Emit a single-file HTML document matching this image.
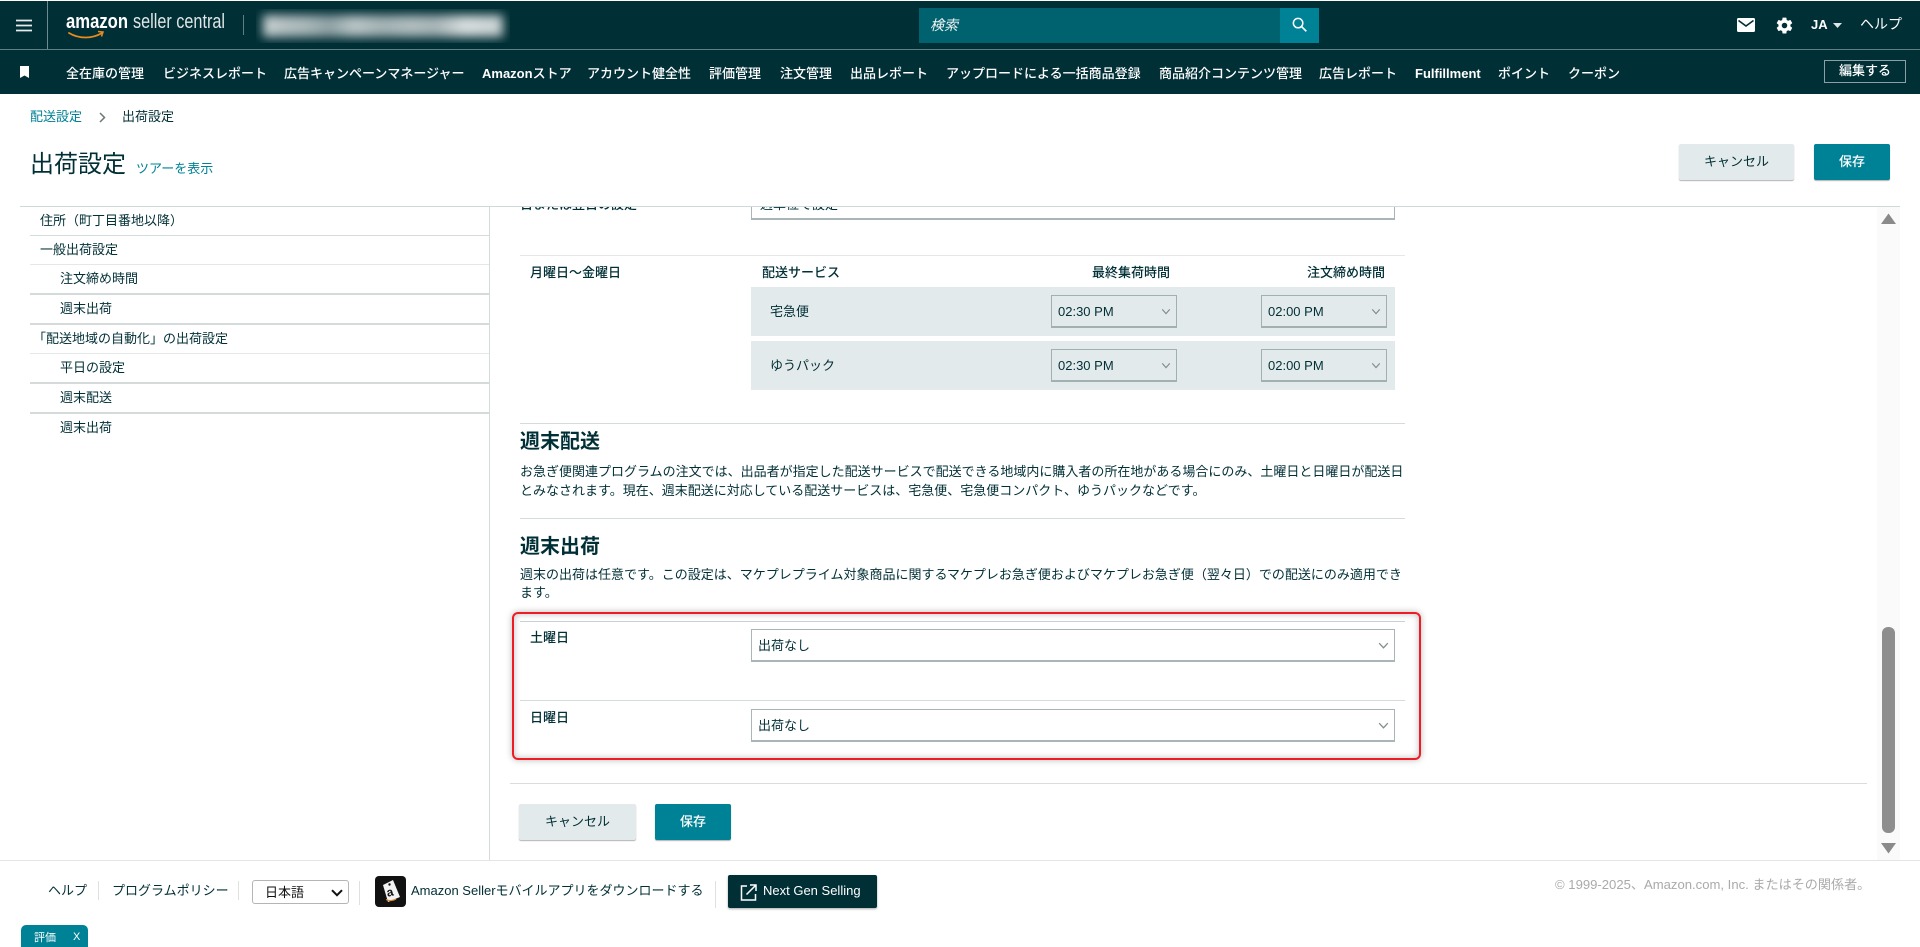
<!DOCTYPE html>
<html lang="ja"><head><meta charset="utf-8"><title>出荷設定</title>
<style>
*{box-sizing:border-box}
html,body{margin:0;padding:0;width:1920px;height:947px;overflow:hidden;background:#fff}
body{position:relative;font-family:"Liberation Sans","Noto Sans CJK JP",sans-serif;font-size:13px;color:#002f36}
.t{position:absolute;white-space:nowrap;line-height:20px;font-size:13px}
.b{position:absolute}
.n{color:#fff;font-weight:500;top:64px}
.n b{font-weight:700}
.s{font-weight:500}
.l{color:#008296}
.sel{position:absolute;background:#fff;border:1px solid #a9b5b7;border-bottom:2px solid #a9b5b7}
.sel span{position:absolute;left:6px;top:50%;margin-top:1px;transform:translateY(-50%);line-height:20px;white-space:nowrap;font-size:13px}
.sel svg{position:absolute;right:5px;top:50%;margin-top:-3px}
.btn{position:absolute;text-align:center;border-radius:2px;box-shadow:0 1px 1px rgba(0,0,0,.3);font-size:13px;height:36px;line-height:35px}
.c{background:#e3eaeb;color:#002f36}
.v{background:#008296;color:#fff;font-weight:500}
.hl{position:absolute;height:1px;background:#d5dbdb}
</style></head><body>

<!-- top bars -->
<div class="b" style="left:0;top:1px;width:1920px;height:48px;background:#002f36"></div>
<div class="b" style="left:0;top:49px;width:1920px;height:1px;background:#5f7f83"></div>
<div class="b" style="left:0;top:50px;width:1920px;height:44px;background:#002f36"></div>

<svg class="b" style="left:16px;top:19px" width="16" height="13" viewBox="0 0 16 13"><path d="M0 1.500h16M0 6.500h16M0 11.500h16" stroke="#e6eaea" stroke-width="1.700"/></svg>
<div class="b" style="left:47px;top:1px;width:1px;height:48px;background:#6f8a8e"></div>

<!-- logo -->
<svg class="b" style="left:60px;top:7px" width="175" height="36" viewBox="0 0 175 36">
<text x="6" y="21" fill="#fff" font-family="Liberation Sans" font-weight="700" font-size="20" textLength="62" lengthAdjust="spacingAndGlyphs">amazon</text>
<text x="73" y="21" fill="#dfe6e7" font-family="Liberation Sans" font-size="20" textLength="92" lengthAdjust="spacingAndGlyphs">seller central</text>
<path d="M9 26c10 6 23 6 33 0" fill="none" stroke="#e88b1f" stroke-width="1.800" stroke-linecap="round"/>
<path d="M38 24.500l5 .5-1.500 4.500" fill="none" stroke="#e88b1f" stroke-width="1.500"/>
</svg>
<div class="b" style="left:243px;top:15px;width:1px;height:20px;background:#5f7f83"></div>

<!-- blurred store name -->
<div class="b" style="left:256px;top:9px;width:254px;height:34px;overflow:hidden">
  <div class="b" style="left:7px;top:6px;width:240px;height:22px;background:linear-gradient(90deg,#c9d3d4 0%,#b5c1c3 8%,#a9b7b9 18%,#8fa2a5 28%,#b9c5c7 38%,#a3b2b4 50%,#b0bdbf 62%,#a6b4b6 72%,#d6dddd 84%,#c6d0d1 100%);filter:blur(5px)"></div>
</div>

<!-- search -->
<div class="b" style="left:919px;top:8px;width:361px;height:35px;background:#00616f"></div>
<div class="t" style="left:930px;top:15px;color:#f0f5f5;font-style:italic;font-size:14px">検索</div>
<div class="b" style="left:1280px;top:8px;width:39px;height:35px;background:#008296"></div>
<svg class="b" style="left:1291px;top:16px" width="17" height="17" viewBox="0 0 18 18"><circle cx="7.500" cy="7.500" r="5" fill="none" stroke="#fff" stroke-width="1.600"/><path d="M11.200 11.200l5 5" stroke="#fff" stroke-width="1.800"/></svg>

<!-- right icons -->
<svg class="b" style="left:1737px;top:18px" width="18" height="14" viewBox="0 0 18 14"><rect width="18" height="14" rx="1.500" fill="#fff"/><path d="M1.500 2.500L9 8l7.500-5.500" fill="none" stroke="#002f36" stroke-width="1.600"/></svg>
<svg class="b" style="left:1775px;top:16px" width="19" height="19" viewBox="0 0 24 24"><path fill="#fff" d="M19.400 13c.04-.33.06-.66.06-1s-.02-.67-.06-1l2.100-1.640c.19-.15.24-.42.12-.64l-2-3.460c-.12-.22-.39-.3-.61-.22l-2.480 1a7.300 7.300 0 0 0-1.730-1L14.430 2.400a.49.49 0 0 0-.49-.4h-4a.49.49 0 0 0-.49.42L9.080 5.050c-.61.25-1.170.59-1.690 1l-2.490-1a.5.5 0 0 0-.61.22l-2 3.460c-.13.22-.07.49.12.64L4.500 11c-.04.33-.07.66-.07 1s.03.67.07 1l-2.110 1.640c-.19.15-.24.42-.12.64l2 3.460c.12.22.39.3.61.22l2.490-1c.52.4 1.080.74 1.690 1l.38 2.650c.03.24.24.42.49.42h4c.25 0 .46-.18.49-.42l.38-2.650c.61-.25 1.170-.59 1.690-1l2.490 1c.22.08.49 0 .61-.22l2-3.460c.12-.22.07-.49-.12-.64L19.400 13zM12 15.500A3.500 3.500 0 1 1 12 8.500a3.500 3.500 0 0 1 0 7z"/></svg>
<div class="t" style="left:1811px;top:15px;color:#fff;font-size:13px;font-weight:700">JA</div>
<svg class="b" style="left:1833px;top:23px" width="9" height="5" viewBox="0 0 9 5"><path d="M0 0h9L4.500 5z" fill="#dfe6e7"/></svg>
<div class="t" style="left:1860px;top:14px;color:#fff;font-size:14px">ヘルプ</div>

<!-- nav -->
<svg class="b" style="left:20px;top:66px" width="9" height="12" viewBox="0 0 9 12"><path d="M0 0h9v12L4.500 9.500 0 12z" fill="#fff"/></svg>
<div class="t n" style="left:66px">全在庫の管理</div>
<div class="t n" style="left:163px">ビジネスレポート</div>
<div class="t n" style="left:284px">広告キャンペーンマネージャー</div>
<div class="t n" style="left:482px"><b>Amazon</b>ストア</div>
<div class="t n" style="left:587px">アカウント健全性</div>
<div class="t n" style="left:709px">評価管理</div>
<div class="t n" style="left:780px">注文管理</div>
<div class="t n" style="left:850px">出品レポート</div>
<div class="t n" style="left:946px">アップロードによる一括商品登録</div>
<div class="t n" style="left:1159px">商品紹介コンテンツ管理</div>
<div class="t n" style="left:1319px">広告レポート</div>
<div class="t n" style="left:1415px"><b>Fulfillment</b></div>
<div class="t n" style="left:1498px">ポイント</div>
<div class="t n" style="left:1568px">クーポン</div>
<div class="b" style="left:1824px;top:60px;width:82px;height:23px;border:1px solid #8aa0a3;color:#fff;text-align:center;line-height:20px;font-weight:500">編集する</div>

<!-- page header -->
<div class="t l" style="left:30px;top:107px">配送設定</div>
<svg class="b" style="left:99px;top:112px" width="7" height="11" viewBox="0 0 7 11"><path d="M1 1l4.500 4.500L1 10" fill="none" stroke="#6c7778" stroke-width="1.500"/></svg>
<div class="t" style="left:122px;top:107px">出荷設定</div>
<div class="t" style="left:30px;top:150px;font-size:24px;line-height:30px">出荷設定</div>
<div class="t l" style="left:136px;top:159px">ツアーを表示</div>
<div class="btn c" style="left:1679px;top:144px;width:115px">キャンセル</div>
<div class="btn v" style="left:1814px;top:144px;width:76px">保存</div>
<div class="hl" style="left:20px;top:206px;width:1880px;background:#d0d9da"></div>

<!-- sidebar -->
<div class="b" style="left:489px;top:207px;width:1px;height:653px;background:#d5dbdb"></div>
<div class="t" style="left:40px;top:211px">住所（町丁目番地以降）</div>
<div class="hl" style="left:30px;top:235px;width:459px"></div>
<div class="t" style="left:40px;top:240px">一般出荷設定</div>
<div class="hl" style="left:30px;top:264px;width:459px;background:#e4e8e8"></div>
<div class="t" style="left:60px;top:269px">注文締め時間</div>
<div class="hl" style="left:30px;top:293px;width:459px;height:2px"></div>
<div class="t" style="left:60px;top:299px">週末出荷</div>
<div class="hl" style="left:30px;top:323px;width:459px;height:2px"></div>
<div class="t" style="left:33px;top:329px">「配送地域の自動化」の出荷設定</div>
<div class="hl" style="left:30px;top:353px;width:459px;background:#e4e8e8"></div>
<div class="t" style="left:60px;top:358px">平日の設定</div>
<div class="hl" style="left:30px;top:382px;width:459px;height:2px"></div>
<div class="t" style="left:60px;top:388px">週末配送</div>
<div class="hl" style="left:30px;top:412px;width:459px;height:2px"></div>
<div class="t" style="left:60px;top:418px">週末出荷</div>

<!-- clipped top row -->
<div class="b" style="left:490px;top:207px;width:1000px;height:20px;overflow:hidden">
  <div class="t s" style="left:30px;top:-12px">日または翌日の設定</div>
  <div class="b" style="left:261px;top:-30px;width:644px;height:43px;background:#fff;border:1px solid #a9b5b7;border-bottom:2px solid #a9b5b7"></div>
  <div class="t" style="left:270px;top:-12px">週単位で設定</div>
</div>

<!-- weekday -->
<div class="hl" style="left:520px;top:255px;width:885px;background:#e4e8e8"></div>
<div class="t s" style="left:530px;top:263px">月曜日〜金曜日</div>
<div class="t s" style="left:762px;top:263px">配送サービス</div>
<div class="t s" style="left:1092px;top:263px">最終集荷時間</div>
<div class="t s" style="left:1307px;top:263px">注文締め時間</div>
<div class="b" style="left:751px;top:287px;width:644px;height:49px;background:#e3eaeb"></div>
<div class="b" style="left:751px;top:341px;width:644px;height:49px;background:#e3eaeb"></div>
<div class="t" style="left:770px;top:302px">宅急便</div>
<div class="t" style="left:770px;top:356px">ゆうパック</div>

<div class="sel" style="left:1051px;top:295px;width:126px;height:33px;background:#e3eaeb;border:1px solid #a3b0b2;border-bottom:2px solid #a3b0b2"><span>02:30 PM</span><svg width="10" height="7" viewBox="0 0 12 8"><path d="M1.500 1.500L6 6.500l4.500-5" fill="none" stroke="#7e8d8f" stroke-width="1.400"/></svg></div>
<div class="sel" style="left:1261px;top:295px;width:126px;height:33px;background:#e3eaeb;border:1px solid #a3b0b2;border-bottom:2px solid #a3b0b2"><span>02:00 PM</span><svg width="10" height="7" viewBox="0 0 12 8"><path d="M1.500 1.500L6 6.500l4.500-5" fill="none" stroke="#7e8d8f" stroke-width="1.400"/></svg></div>
<div class="sel" style="left:1051px;top:349px;width:126px;height:33px;background:#e3eaeb;border:1px solid #a3b0b2;border-bottom:2px solid #a3b0b2"><span>02:30 PM</span><svg width="10" height="7" viewBox="0 0 12 8"><path d="M1.500 1.500L6 6.500l4.500-5" fill="none" stroke="#7e8d8f" stroke-width="1.400"/></svg></div>
<div class="sel" style="left:1261px;top:349px;width:126px;height:33px;background:#e3eaeb;border:1px solid #a3b0b2;border-bottom:2px solid #a3b0b2"><span>02:00 PM</span><svg width="10" height="7" viewBox="0 0 12 8"><path d="M1.500 1.500L6 6.500l4.500-5" fill="none" stroke="#7e8d8f" stroke-width="1.400"/></svg></div>

<div class="hl" style="left:520px;top:423px;width:885px"></div>

<!-- weekend delivery -->
<div class="t" style="left:520px;top:428px;font-size:20px;font-weight:700;line-height:28px">週末配送</div>
<div class="t" style="left:520px;top:462px">お急ぎ便関連プログラムの注文では、出品者が指定した配送サービスで配送できる地域内に購入者の所在地がある場合にのみ、土曜日と日曜日が配送日</div>
<div class="t" style="left:520px;top:481px">とみなされます。現在、週末配送に対応している配送サービスは、宅急便、宅急便コンパクト、ゆうパックなどです。</div>
<div class="hl" style="left:520px;top:518px;width:885px"></div>

<!-- weekend shipping -->
<div class="t" style="left:520px;top:533px;font-size:20px;font-weight:700;line-height:28px">週末出荷</div>
<div class="t" style="left:520px;top:565px">週末の出荷は任意です。この設定は、マケプレプライム対象商品に関するマケプレお急ぎ便およびマケプレお急ぎ便（翌々日）での配送にのみ適用でき</div>
<div class="t" style="left:520px;top:583px">ます。</div>

<div class="hl" style="left:520px;top:621px;width:885px;background:#c8d2d3"></div>
<div class="t s" style="left:530px;top:628px">土曜日</div>
<div class="sel" style="left:751px;top:629px;width:644px;height:33px"><span>出荷なし</span><svg width="11" height="7" viewBox="0 0 14 8"><path d="M1.500 1L7 7l5.500-6" fill="none" stroke="#7e8d8f" stroke-width="1.600"/></svg></div>
<div class="hl" style="left:520px;top:700px;width:885px"></div>
<div class="t s" style="left:530px;top:708px">日曜日</div>
<div class="sel" style="left:751px;top:709px;width:644px;height:33px"><span>出荷なし</span><svg width="11" height="7" viewBox="0 0 14 8"><path d="M1.500 1L7 7l5.500-6" fill="none" stroke="#7e8d8f" stroke-width="1.600"/></svg></div>

<!-- red highlight -->
<div class="b" style="left:512px;top:612px;width:909px;height:148px;border:2px solid #ee1c25;border-radius:6px;box-shadow:0 0 7px rgba(0,0,0,.28),inset 0 0 7px rgba(0,0,0,.25)"></div>

<!-- bottom actions -->
<div class="hl" style="left:510px;top:783px;width:1357px;background:#dcdcdc"></div>
<div class="btn c" style="left:519px;top:804px;width:117px">キャンセル</div>
<div class="btn v" style="left:655px;top:804px;width:76px">保存</div>

<!-- scrollbar -->
<div class="b" style="left:1877px;top:207px;width:23px;height:653px;background:#fafafa"></div>
<svg class="b" style="left:1881px;top:213px" width="15" height="11" viewBox="0 0 15 11"><path d="M7.500 0.500L15 11H0z" fill="#8a8a8a"/></svg>
<div class="b" style="left:1882px;top:627px;width:13px;height:206px;background:#8e8e8e;border-radius:6px"></div>
<svg class="b" style="left:1881px;top:843px" width="15" height="11" viewBox="0 0 15 11"><path d="M0 0h15L7.500 10.500z" fill="#8a8a8a"/></svg>

<!-- footer -->
<div class="hl" style="left:0;top:860px;width:1920px;height:1px;background:#e5e5e5"></div>
<div class="t" style="left:48px;top:881px">ヘルプ</div>
<div class="b" style="left:98px;top:881px;width:1px;height:19px;background:#e0e0e0"></div>
<div class="t" style="left:112px;top:881px">プログラムポリシー</div>
<div class="b" style="left:238px;top:881px;width:1px;height:19px;background:#e0e0e0"></div>
<div class="b" style="left:252px;top:880px;width:97px;height:24px;border:1px solid #b5b5b5;border-radius:3px;background:#fff"></div>
<div class="t" style="left:265px;top:883px;color:#111">日本語</div>
<svg class="b" style="left:331px;top:889px" width="12" height="8" viewBox="0 0 12 8"><path d="M1 1.200l5 5 5-5" fill="none" stroke="#111" stroke-width="2"/></svg>
<div class="b" style="left:359px;top:881px;width:1px;height:24px;background:#e0e0e0"></div>
<svg class="b" style="left:375px;top:876px" width="31" height="31" viewBox="0 0 31 31">
<rect width="31" height="31" rx="4" fill="#111"/>
<path d="M8 9l10-5 7 17-12 5z" fill="#f4f4f4"/>
<circle cx="14.500" cy="8.500" r="1.200" fill="#111"/>
<text x="12" y="20" font-family="Liberation Sans" font-weight="700" font-size="12" fill="#111" transform="rotate(-14 16 18)">a</text>
<path d="M11 23.500c3 1.500 7 1.500 10-.5" fill="none" stroke="#e88b1f" stroke-width="1.200"/>
</svg>
<div class="t" style="left:411px;top:881px">Amazon Sellerモバイルアプリをダウンロードする</div>
<div class="b" style="left:715px;top:881px;width:1px;height:27px;background:#e0e0e0"></div>
<div class="b" style="left:728px;top:875px;width:149px;height:33px;background:#002f36;border-radius:2px;box-shadow:0 1px 2px rgba(0,0,0,.35)"></div>
<svg class="b" style="left:740px;top:884px" width="17" height="17" viewBox="0 0 17 17"><path d="M7 2H1.500v14h14V10" fill="none" stroke="#fff" stroke-width="1.500"/><path d="M6.500 10.500L15.500 1.500M10 1h6v6" fill="none" stroke="#fff" stroke-width="1.500"/></svg>
<div class="t s" style="left:763px;top:881px;color:#fff">Next Gen Selling</div>
<div class="t" style="left:1555px;top:875px;color:#aaa;font-size:13.100px">© 1999-2025、Amazon.com, Inc. またはその関係者。</div>

<!-- feedback tab -->
<div class="b" style="left:21px;top:925px;width:67px;height:22px;background:#008296;border-radius:5px 5px 0 0"></div>
<div class="t" style="left:34px;top:928px;color:#fff;font-size:11px;line-height:20px">評価</div>
<div class="t" style="left:73px;top:927px;color:#fff;font-size:11px;line-height:20px">X</div>
</body></html>
